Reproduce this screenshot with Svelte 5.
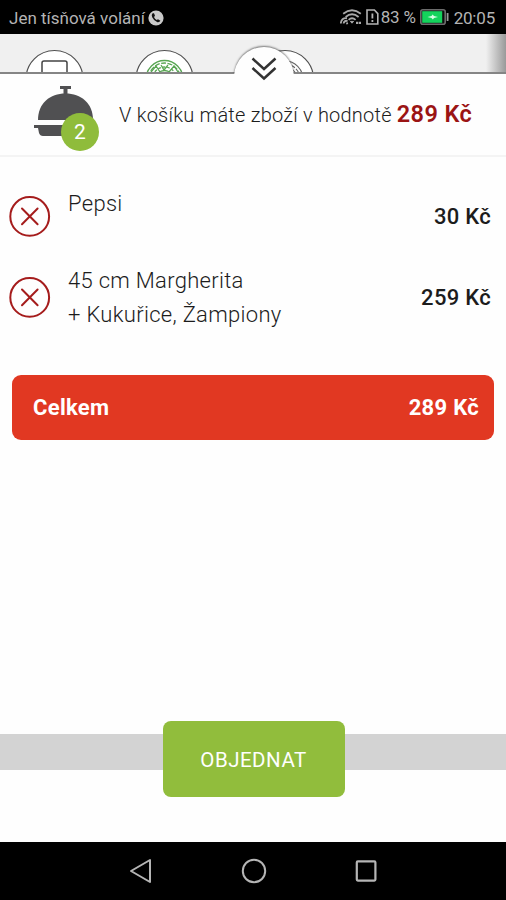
<script lang="ts">
  const items = [
    { id: 1, lines: ['Pepsi'], price: 30 },
    { id: 2, lines: ['45 cm Margherita', '+ Kukuřice, Žampiony'], price: 259 }
  ];

  const total = items.reduce((sum, item) => sum + item.price, 0);
</script>

<div class="screen">
  <div class="status-bar">
    <span class="carrier">Jen tísňová volání</span>
    <svg class="call-icon" width="16" height="16" viewBox="0 0 16 16">
      <circle cx="8" cy="8" r="7.6" fill="#c9c9c9" />
      <path d="M4.6 3.3 Q3 4.6 4.2 7.2 Q6 11 9.4 12.2 Q11.6 12.6 12.4 10.8 L10 9.2 L8.7 10.1 Q6.7 9 6 7 L7 5.8 L6 3.2 Z" fill="#111" />
    </svg>
    <span class="spacer"></span>
    <svg class="wifi-icon" width="22" height="16" viewBox="0 0 22 16" fill="none" stroke="#a8a8a8" stroke-width="1.8">
      <path d="M3.2 4.8 Q12 -2.2 20.8 4.8" />
      <path d="M5.6 8 Q12 2.6 18.6 8" />
      <path d="M8.6 10.8 Q12 7.6 15.6 10.8" />
      <path d="M10.4 12.4 L12 14.2 L13.6 12.4 Z" fill="#a8a8a8" stroke-width="1" />
      <path d="M.8 14.5 Q1.2 8.6 7 9.2 M3.6 14.5 Q4 11.4 7.6 11.8 M6.2 14.6 L8 14.2" />
      <path d="M16 13.8 H21" stroke-width="2.2" stroke-dasharray="2.2 .6" />
    </svg>
    <svg class="sim-icon" width="13" height="16" viewBox="0 0 13 16" fill="none" stroke="#b4b4b4" stroke-width="1.6">
      <path d="M1 1 H8.4 L11.8 4.6 V15 H1 Z" />
      <path d="M6.4 4.5 V9.5 M6.4 11 V13" stroke-width="1.8" />
    </svg>
    <span class="percent">83 %</span>
    <svg class="battery" width="29" height="16" viewBox="0 0 29 16">
      <rect x=".8" y=".8" width="24.4" height="14.4" rx="2" fill="#101010" stroke="#6c6c6c" stroke-width="1.6" />
      <rect x="2.2" y="2.2" width="20" height="11.6" fill="#14d35c" />
      <path d="M7.5 8 L11.5 7 L12.6 5.4 L14 7 L18 8 L14 9 L12.9 10.6 L11.5 9 Z" fill="#d9ffe5" />
      <path d="M27.6 4 V12" stroke="#999" stroke-width="1.8" />
    </svg>
    <span class="clock">20:05</span>
  </div>

  <div class="categories">
    <svg width="506" height="40" viewBox="0 0 506 40" fill="none">
      <g fill="#fff" stroke="#505050" stroke-width="1.2">
        <circle cx="54.5" cy="45" r="28.5" />
        <circle cx="164.5" cy="45" r="28.5" />
        <circle cx="285" cy="45" r="28.5" />
      </g>
      <path d="M42 40 V29 Q42 27 44 27 H65 Q67 27 67 29 V40" stroke="#444" stroke-width="1.5" />
      <g stroke="#58a653" stroke-width="1.3">
        <circle cx="164.5" cy="45" r="18.5" />
        <circle cx="164.5" cy="45" r="16" stroke-dasharray="5 1.5" />
        <circle cx="164.5" cy="45" r="12" stroke-dasharray="3 1.5" />
        <circle cx="164.5" cy="45" r="8.5" />
        <path d="M151 38 L156 32 L160 38 M161 31 L164 36 L168 31 M169 38 L174 32 L178 38" />
      </g>
      <g stroke="#666" stroke-width="1.1">
        <circle cx="285" cy="45" r="18" />
        <circle cx="285" cy="45" r="15" stroke-dasharray="4 1.5" />
        <circle cx="285" cy="45" r="12" />
      </g>
      <path d="M0 39 H506" stroke="#858585" stroke-width="2" />
    </svg>
    <button class="collapse" aria-label="Zavřít košík">
      <svg width="26" height="24" viewBox="0 0 26 24" fill="none" stroke="#333" stroke-width="2.5">
        <path d="M1.5 1.5 L13 12 L24.5 1.5" />
        <path d="M1.5 11 L13 21.5 L24.5 11" />
      </svg>
    </button>
  </div>

  <div class="cart-header">
    <div class="cart-icon">
      <svg width="64" height="54" viewBox="0 0 64 54" fill="#505052">
        <path d="M27 2 H38 V5 H34.5 V10 H30.5 V5 H27 Z" />
        <path d="M5 36 C5 19 17 9.5 32.5 9.5 C48 9.5 60 19 60 36 Z" />
        <path d="M1 41 H63 V44 H58 L54 52 H10 Q7 52 6 49 L5 44 H1 Z" />
      </svg>
      <span class="badge">2</span>
    </div>
    <p class="summary">V košíku máte zboží v hodnotě</p>
    <strong class="sum">{total} Kč</strong>
  </div>

  <ul class="items">
    {#each items as item (item.id)}
      <li class="item">
        <button class="remove" aria-label="Odebrat">
          <svg width="42" height="42" viewBox="0 0 42 42" fill="none" stroke="#a51c1c" stroke-width="2" stroke-linecap="round">
            <circle cx="20.7" cy="20.4" r="19.4" />
            <path d="M13 12.5 L28.6 28.3 M28.6 12.5 L13 28.3" />
          </svg>
        </button>
        <div class="name">
          {#each item.lines as line}
            <div>{line}</div>
          {/each}
        </div>
        <strong class="price">{item.price} Kč</strong>
      </li>
    {/each}
  </ul>

  <div class="total">
    <span>Celkem</span>
    <span>{total} Kč</span>
  </div>

  <div class="footer">
    <button class="order">OBJEDNAT</button>
  </div>

  <div class="nav-bar">
    <svg width="24" height="26" viewBox="0 0 24 26" fill="none" stroke="#b5b5b5" stroke-width="2">
      <path d="M21 2 V24 L2 13 Z" stroke-linejoin="round" />
    </svg>
    <svg width="26" height="26" viewBox="0 0 26 26" fill="none" stroke="#b5b5b5" stroke-width="2">
      <circle cx="13" cy="13" r="11.2" />
    </svg>
    <svg width="24" height="24" viewBox="0 0 24 24" fill="none" stroke="#b5b5b5" stroke-width="2.2">
      <rect x="1.8" y="2.4" width="18.6" height="19.2" rx="1" />
    </svg>
  </div>
</div>

<style>
  :global(body) {
    margin: 0;
    background: #fff;
  }

  .screen {
    width: 506px;
    height: 900px;
    display: flex;
    flex-direction: column;
    overflow: hidden;
    background: #fefefe;
    font-family: Roboto, 'Noto Sans', sans-serif;
    color: #1c1c1c;
  }

  button {
    padding: 0;
    border: none;
    background: none;
    font-family: inherit;
    cursor: pointer;
  }

  .status-bar {
    height: 34px;
    flex-shrink: 0;
    display: flex;
    align-items: center;
    box-sizing: border-box;
    padding: 2px 11px 0 9px;
    background: #000;
    color: #b4b4b4;
    font-size: 17px;
    white-space: nowrap;
  }

  .call-icon {
    margin-left: 3px;
  }

  .spacer {
    flex: 1;
  }

  .wifi-icon,
  .sim-icon,
  .battery {
    position: relative;
    top: -1px;
  }

  .sim-icon {
    margin-left: 4px;
  }

  .percent {
    margin: 0 4px 0 2px;
    letter-spacing: -0.2px;
    position: relative;
    top: -1px;
  }

  .clock {
    margin-left: 5px;
    letter-spacing: -0.2px;
  }

  .categories {
    position: relative;
    height: 40px;
    flex-shrink: 0;
    background: linear-gradient(to right, #f0f0f0 0, #f0f0f0 486px, #999 506px);
  }

  .categories > svg {
    display: block;
  }

  .collapse {
    position: absolute;
    left: 234px;
    top: 13px;
    display: flex;
    align-items: flex-start;
    justify-content: center;
    width: 60px;
    height: 60px;
    box-sizing: border-box;
    padding-top: 10px;
    border-radius: 50%;
    background: #fefefe;
  }

  /* rim is visible only above the edge of the cart panel */
  .collapse::before {
    content: '';
    position: absolute;
    inset: 0;
    border-radius: 50%;
    box-shadow: 0 -1px 2px rgba(0, 0, 0, 0.5);
    clip-path: inset(-4px -4px 34px -4px);
  }

  .cart-header {
    height: 83px;
    flex-shrink: 0;
    display: flex;
    align-items: center;
    box-sizing: border-box;
    padding: 0 0 0 33px;
    border-bottom: 2px solid #f4f4f4;
    white-space: nowrap;
  }

  .cart-icon {
    position: relative;
    width: 64px;
    height: 62px;
  }

  .badge {
    position: absolute;
    left: 28px;
    top: 29px;
    width: 38px;
    height: 38px;
    border-radius: 50%;
    background: #8fbc3b;
    color: #fff;
    font-size: 21px;
    line-height: 39px;
    text-align: center;
  }

  .summary {
    margin: 0 0 0 22px;
    font-size: 20px;
    font-weight: 350;
    letter-spacing: 0.22px;
  }

  .sum {
    margin: -1px 0 0 5px;
    color: #9b1414;
    font-size: 23.5px;
    font-weight: 600;
    letter-spacing: 0.4px;
  }

  .items {
    margin: 0;
    padding: 19px 0 0;
    list-style: none;
  }

  .item {
    display: flex;
    align-items: center;
    height: 81px;
    padding: 0 15px 0 9px;
  }

  .remove svg {
    display: block;
  }

  .name {
    flex: 1;
    min-height: 60px;
    margin-left: 17px;
    font-size: 22px;
    font-weight: 350;
    line-height: 34px;
    letter-spacing: 0.3px;
  }

  .price {
    font-size: 22px;
    font-weight: 500;
    letter-spacing: 0.3px;
  }

  .total {
    display: flex;
    align-items: center;
    justify-content: space-between;
    height: 65px;
    flex-shrink: 0;
    box-sizing: border-box;
    margin: 37px 12px 0;
    padding: 0 15px 0 21px;
    border-radius: 9px;
    background: #e13822;
    color: #fff;
    font-size: 22px;
    font-weight: 700;
    letter-spacing: 0.3px;
  }

  .footer {
    display: flex;
    align-items: center;
    justify-content: center;
    height: 36px;
    flex-shrink: 0;
    margin-top: auto;
    margin-bottom: 72px;
    background: #d3d3d3;
  }

  .order {
    width: 182px;
    height: 76px;
    flex-shrink: 0;
    margin: 13px 0 0 1px;
    padding-top: 2px;
    border-radius: 8px;
    background: #91bd3c;
    color: #fff;
    font-size: 20.5px;
    font-weight: 450;
    letter-spacing: 0.5px;
  }

  .nav-bar {
    display: flex;
    align-items: center;
    justify-content: center;
    gap: 88px;
    height: 58px;
    flex-shrink: 0;
    padding-left: 2px;
    background: #000;
  }
</style>
